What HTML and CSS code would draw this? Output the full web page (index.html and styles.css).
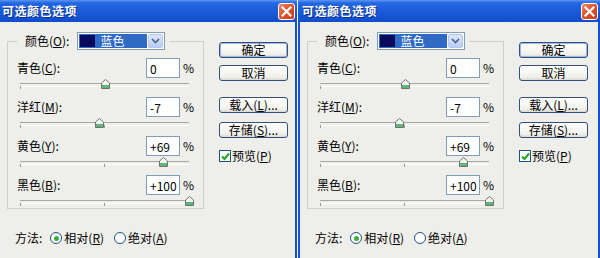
FILE: index.html
```html
<!DOCTYPE html>
<html lang="zh-CN">

<head>
    <meta charset="utf-8">
    <title>可选颜色选项</title>
    <link rel="stylesheet" href="styles.css">
</head>

<body>
    <div class="screen">
        <div class="window shifted">
            <div class="titlebar">
                <span class="title">可选颜色选项</span>
                <span class="close"><svg width="11" height="11" viewBox="0 0 11 11"><path d="M1.5 1.5 L9.5 9.5 M9.5 1.5 L1.5 9.5" stroke="#fff" stroke-width="2.2" stroke-linecap="square"/></svg></span>
            </div>
            <div class="body">
                <div class="main">
                    <fieldset class="group">
                        <legend class="legend">
                            <span class="legend-label">颜色(<u>O</u>):</span>
                            <span class="select">
                                <span class="sel-value"><span class="swatch"></span><span class="sel-text">蓝色</span></span>
                                <span class="sel-arrow"><svg width="9" height="6" viewBox="0 0 9 6"><path d="M1 1 L4.5 4.5 L8 1" fill="none" stroke="#4d6185" stroke-width="1.6"/></svg></span>
                            </span>
                        </legend>
                        <div class="adjust">
                            <div class="field-row"><span class="field-label">青色(<u>C</u>):</span><span class="num">0</span><span class="pct">%</span></div>
                            <div class="slider"><span class="thumb" style="left: 50.5%"><svg width="9" height="10" viewBox="0 0 9 10"><path d="M0.5 4 L4.5 0.5 L8.5 4 L8.5 9.5 L0.5 9.5 Z" fill="#f4f4f4" stroke="#707070"/><rect x="1" y="6" width="7" height="3" fill="#5cb878"/></svg></span></div>
                        </div>
                        <div class="adjust">
                            <div class="field-row"><span class="field-label">洋红(<u>M</u>):</span><span class="num">-7</span><span class="pct">%</span></div>
                            <div class="slider"><span class="thumb" style="left: 47%"><svg width="9" height="10" viewBox="0 0 9 10"><path d="M0.5 4 L4.5 0.5 L8.5 4 L8.5 9.5 L0.5 9.5 Z" fill="#f4f4f4" stroke="#707070"/><rect x="1" y="6" width="7" height="3" fill="#5cb878"/></svg></span></div>
                        </div>
                        <div class="adjust">
                            <div class="field-row"><span class="field-label">黄色(<u>Y</u>):</span><span class="num">+69</span><span class="pct">%</span></div>
                            <div class="slider"><span class="thumb" style="left: 84.5%"><svg width="9" height="10" viewBox="0 0 9 10"><path d="M0.5 4 L4.5 0.5 L8.5 4 L8.5 9.5 L0.5 9.5 Z" fill="#f4f4f4" stroke="#707070"/><rect x="1" y="6" width="7" height="3" fill="#5cb878"/></svg></span></div>
                        </div>
                        <div class="adjust">
                            <div class="field-row"><span class="field-label">黑色(<u>B</u>):</span><span class="num">+100</span><span class="pct">%</span></div>
                            <div class="slider"><span class="thumb" style="left: 100%"><svg width="9" height="10" viewBox="0 0 9 10"><path d="M0.5 4 L4.5 0.5 L8.5 4 L8.5 9.5 L0.5 9.5 Z" fill="#f4f4f4" stroke="#707070"/><rect x="1" y="6" width="7" height="3" fill="#5cb878"/></svg></span></div>
                        </div>
                    </fieldset>
                    <div class="method">
                        <span class="method-label">方法:</span>
                        <span class="radio checked"></span><span class="radio-text">相对(<u>R</u>)</span>
                        <span class="radio"></span><span class="radio-text">绝对(<u>A</u>)</span>
                    </div>
                </div>
                <div class="side">
                    <button class="btn btn-ok">确定</button>
                    <button class="btn">取消</button>
                    <button class="btn btn-load">载入(<u>L</u>)...</button>
                    <button class="btn">存储(<u>S</u>)...</button>
                    <div class="preview"><span class="checkbox"><svg width="9" height="9" viewBox="0 0 9 9"><path d="M1 4.5 L3.5 7 L8 1.5" fill="none" stroke="#21a121" stroke-width="2"/></svg></span><span>预览(<u>P</u>)</span></div>
                </div>
            </div>
        </div>

        <div class="window grow">
            <div class="titlebar">
                <span class="title">可选颜色选项</span>
                <span class="close"><svg width="11" height="11" viewBox="0 0 11 11"><path d="M1.5 1.5 L9.5 9.5 M9.5 1.5 L1.5 9.5" stroke="#fff" stroke-width="2.2" stroke-linecap="square"/></svg></span>
            </div>
            <div class="body">
                <div class="main">
                    <fieldset class="group">
                        <legend class="legend">
                            <span class="legend-label">颜色(<u>O</u>):</span>
                            <span class="select">
                                <span class="sel-value"><span class="swatch"></span><span class="sel-text">蓝色</span></span>
                                <span class="sel-arrow"><svg width="9" height="6" viewBox="0 0 9 6"><path d="M1 1 L4.5 4.5 L8 1" fill="none" stroke="#4d6185" stroke-width="1.6"/></svg></span>
                            </span>
                        </legend>
                        <div class="adjust">
                            <div class="field-row"><span class="field-label">青色(<u>C</u>):</span><span class="num">0</span><span class="pct">%</span></div>
                            <div class="slider"><span class="thumb" style="left: 50.5%"><svg width="9" height="10" viewBox="0 0 9 10"><path d="M0.5 4 L4.5 0.5 L8.5 4 L8.5 9.5 L0.5 9.5 Z" fill="#f4f4f4" stroke="#707070"/><rect x="1" y="6" width="7" height="3" fill="#5cb878"/></svg></span></div>
                        </div>
                        <div class="adjust">
                            <div class="field-row"><span class="field-label">洋红(<u>M</u>):</span><span class="num">-7</span><span class="pct">%</span></div>
                            <div class="slider"><span class="thumb" style="left: 47%"><svg width="9" height="10" viewBox="0 0 9 10"><path d="M0.5 4 L4.5 0.5 L8.5 4 L8.5 9.5 L0.5 9.5 Z" fill="#f4f4f4" stroke="#707070"/><rect x="1" y="6" width="7" height="3" fill="#5cb878"/></svg></span></div>
                        </div>
                        <div class="adjust">
                            <div class="field-row"><span class="field-label">黄色(<u>Y</u>):</span><span class="num">+69</span><span class="pct">%</span></div>
                            <div class="slider"><span class="thumb" style="left: 84.5%"><svg width="9" height="10" viewBox="0 0 9 10"><path d="M0.5 4 L4.5 0.5 L8.5 4 L8.5 9.5 L0.5 9.5 Z" fill="#f4f4f4" stroke="#707070"/><rect x="1" y="6" width="7" height="3" fill="#5cb878"/></svg></span></div>
                        </div>
                        <div class="adjust">
                            <div class="field-row"><span class="field-label">黑色(<u>B</u>):</span><span class="num">+100</span><span class="pct">%</span></div>
                            <div class="slider"><span class="thumb" style="left: 100%"><svg width="9" height="10" viewBox="0 0 9 10"><path d="M0.5 4 L4.5 0.5 L8.5 4 L8.5 9.5 L0.5 9.5 Z" fill="#f4f4f4" stroke="#707070"/><rect x="1" y="6" width="7" height="3" fill="#5cb878"/></svg></span></div>
                        </div>
                    </fieldset>
                    <div class="method">
                        <span class="method-label">方法:</span>
                        <span class="radio checked"></span><span class="radio-text">相对(<u>R</u>)</span>
                        <span class="radio"></span><span class="radio-text">绝对(<u>A</u>)</span>
                    </div>
                </div>
                <div class="side">
                    <button class="btn btn-ok">确定</button>
                    <button class="btn">取消</button>
                    <button class="btn btn-load">载入(<u>L</u>)...</button>
                    <button class="btn">存储(<u>S</u>)...</button>
                    <div class="preview"><span class="checkbox"><svg width="9" height="9" viewBox="0 0 9 9"><path d="M1 4.5 L3.5 7 L8 1.5" fill="none" stroke="#21a121" stroke-width="2"/></svg></span><span>预览(<u>P</u>)</span></div>
                </div>
            </div>
        </div>
    </div>
</body>

</html>
```

FILE: styles.css
```css
* {
    margin: 0;
    padding: 0;
    box-sizing: border-box;
}

body {
    font-family: "Noto Sans CJK SC", "Liberation Sans", sans-serif;
    font-size: 12px;
    line-height: 16px;
    color: #000;
    background: #ffffff;
    overflow: hidden;
}

.screen {
    display: flex;
    gap: 1px;
    width: 600px;
    height: 258px;
    overflow: hidden;
    background: #f4f6fb;
}

.window {
    flex: none;
    width: 299px;
    display: flex;
    flex-direction: column;
    background: #eeeeea;
}

.window.shifted {
    margin-left: -2px;
}

.window.grow {
    flex: 1;
    width: auto;
}

.titlebar {
    height: 22px;
    display: flex;
    align-items: center;
    justify-content: space-between;
    padding: 0 2px 0 4px;
    background: linear-gradient(#5a97f2 0, #2466e2 3px, #1a5bd9 50%, #114dca 100%);
}

.title {
    color: #ffffff;
    font-weight: 700;
    font-size: 12px;
    letter-spacing: 0.5px;
    text-shadow: 1px 1px 0 #0b2f8c;
}

.close {
    width: 17px;
    height: 17px;
    display: flex;
    align-items: center;
    justify-content: center;
    border: 1px solid #ffffff;
    border-radius: 3px;
    background: linear-gradient(135deg, #ef8a66 0%, #e0542c 45%, #c83c18 100%);
}

.body {
    flex: 1;
    display: flex;
    padding: 10px 0 0 7px;
    border-left: 2px solid #1650d0;
    border-right: 2px solid #1650d0;
}

.main {
    width: 197px;
    flex: none;
}

.group {
    width: 197px;
    border: 1px solid #cfcfc8;
    padding: 8px 10px 1px 9px;
    margin: 0;
}

.legend {
    display: flex;
    align-items: center;
    height: 18px;
    padding: 0 4px 0 8px;
}

.legend-label {
    margin-right: 8px;
}

.select {
    width: 88px;
    height: 18px;
    display: flex;
    border: 1px solid #7f9db9;
    background: #ffffff;
    padding: 1px;
}

.sel-value {
    flex: 1;
    display: flex;
    align-items: center;
    background: #316ac5;
    padding: 1px;
}

.swatch {
    width: 15px;
    height: 12px;
    background: #0a0a5c;
}

.sel-text {
    color: #ffffff;
    margin-left: 5px;
    line-height: 14px;
}

.sel-arrow {
    width: 15px;
    display: flex;
    align-items: center;
    justify-content: center;
    margin-left: 1px;
    border-radius: 2px;
    background: linear-gradient(#dce6fc, #b9cdf7);
    border: 1px solid #b4c6ee;
}

.adjust {
    margin-bottom: 7px;
}

.adjust:last-child {
    margin-bottom: 0;
}

.field-row {
    display: flex;
    align-items: center;
    height: 20px;
}

.field-label {
    flex: 1;
}

.num {
    width: 34px;
    height: 20px;
    border: 1px solid #7f9db9;
    background: #ffffff;
    padding: 1px 0 0 3px;
    line-height: 17px;
}

.pct {
    width: 10px;
    margin-left: 3px;
}

.slider {
    position: relative;
    height: 12px;
    margin: 0 4px 0 3px;
}

.slider::before {
    content: "";
    position: absolute;
    left: 0;
    right: 0;
    top: 5px;
    height: 2px;
    border-top: 1px solid #a8a8a0;
    border-bottom: 1px solid #ffffff;
}

.slider::after {
    content: "";
    position: absolute;
    left: 0;
    right: 0;
    top: 8px;
    height: 3px;
    background:
        linear-gradient(#9a9a94, #9a9a94) left top / 1px 3px no-repeat,
        linear-gradient(#9a9a94, #9a9a94) 50% top / 1px 3px no-repeat;
}

.thumb {
    position: absolute;
    top: 1px;
    width: 9px;
    height: 10px;
    margin-left: -4px;
    display: block;
    line-height: 0;
    z-index: 1;
}

.method {
    display: flex;
    align-items: center;
    height: 16px;
    margin: 21px 0 0 8px;
}

.method-label {
    margin-right: 8px;
}

.radio {
    width: 12px;
    height: 12px;
    border-radius: 50%;
    border: 1px solid #1c5180;
    background: #ffffff;
    display: flex;
    align-items: center;
    justify-content: center;
    margin-right: 2px;
}

.radio.checked::after {
    content: "";
    width: 5px;
    height: 5px;
    border-radius: 50%;
    background: #3cae3c;
}

.radio-text {
    margin-right: 10px;
}

.side {
    display: flex;
    flex-direction: column;
    align-items: flex-start;
    margin: 10px 0 0 15px;
}

.btn {
    width: 69px;
    height: 16px;
    font-family: inherit;
    font-size: 12px;
    line-height: 14px;
    color: #000;
    border: 1px solid #33507a;
    border-radius: 3px;
    background: linear-gradient(#ffffff, #f0f0ea 80%, #d8d8d0);
    margin-bottom: 7px;
}

.btn-ok {
    box-shadow: inset 0 0 0 1px #9cb6e8;
}

.btn:nth-of-type(2) {
    margin-bottom: 16px;
}

.btn:nth-of-type(3) {
    margin-bottom: 9px;
}

.btn:nth-of-type(4) {
    margin-bottom: 10px;
}

.preview {
    display: flex;
    align-items: center;
    gap: 1px;
}

.checkbox {
    width: 12px;
    height: 12px;
    border: 1px solid #1c5180;
    background: #ffffff;
    display: flex;
    align-items: center;
    justify-content: center;
}
```
